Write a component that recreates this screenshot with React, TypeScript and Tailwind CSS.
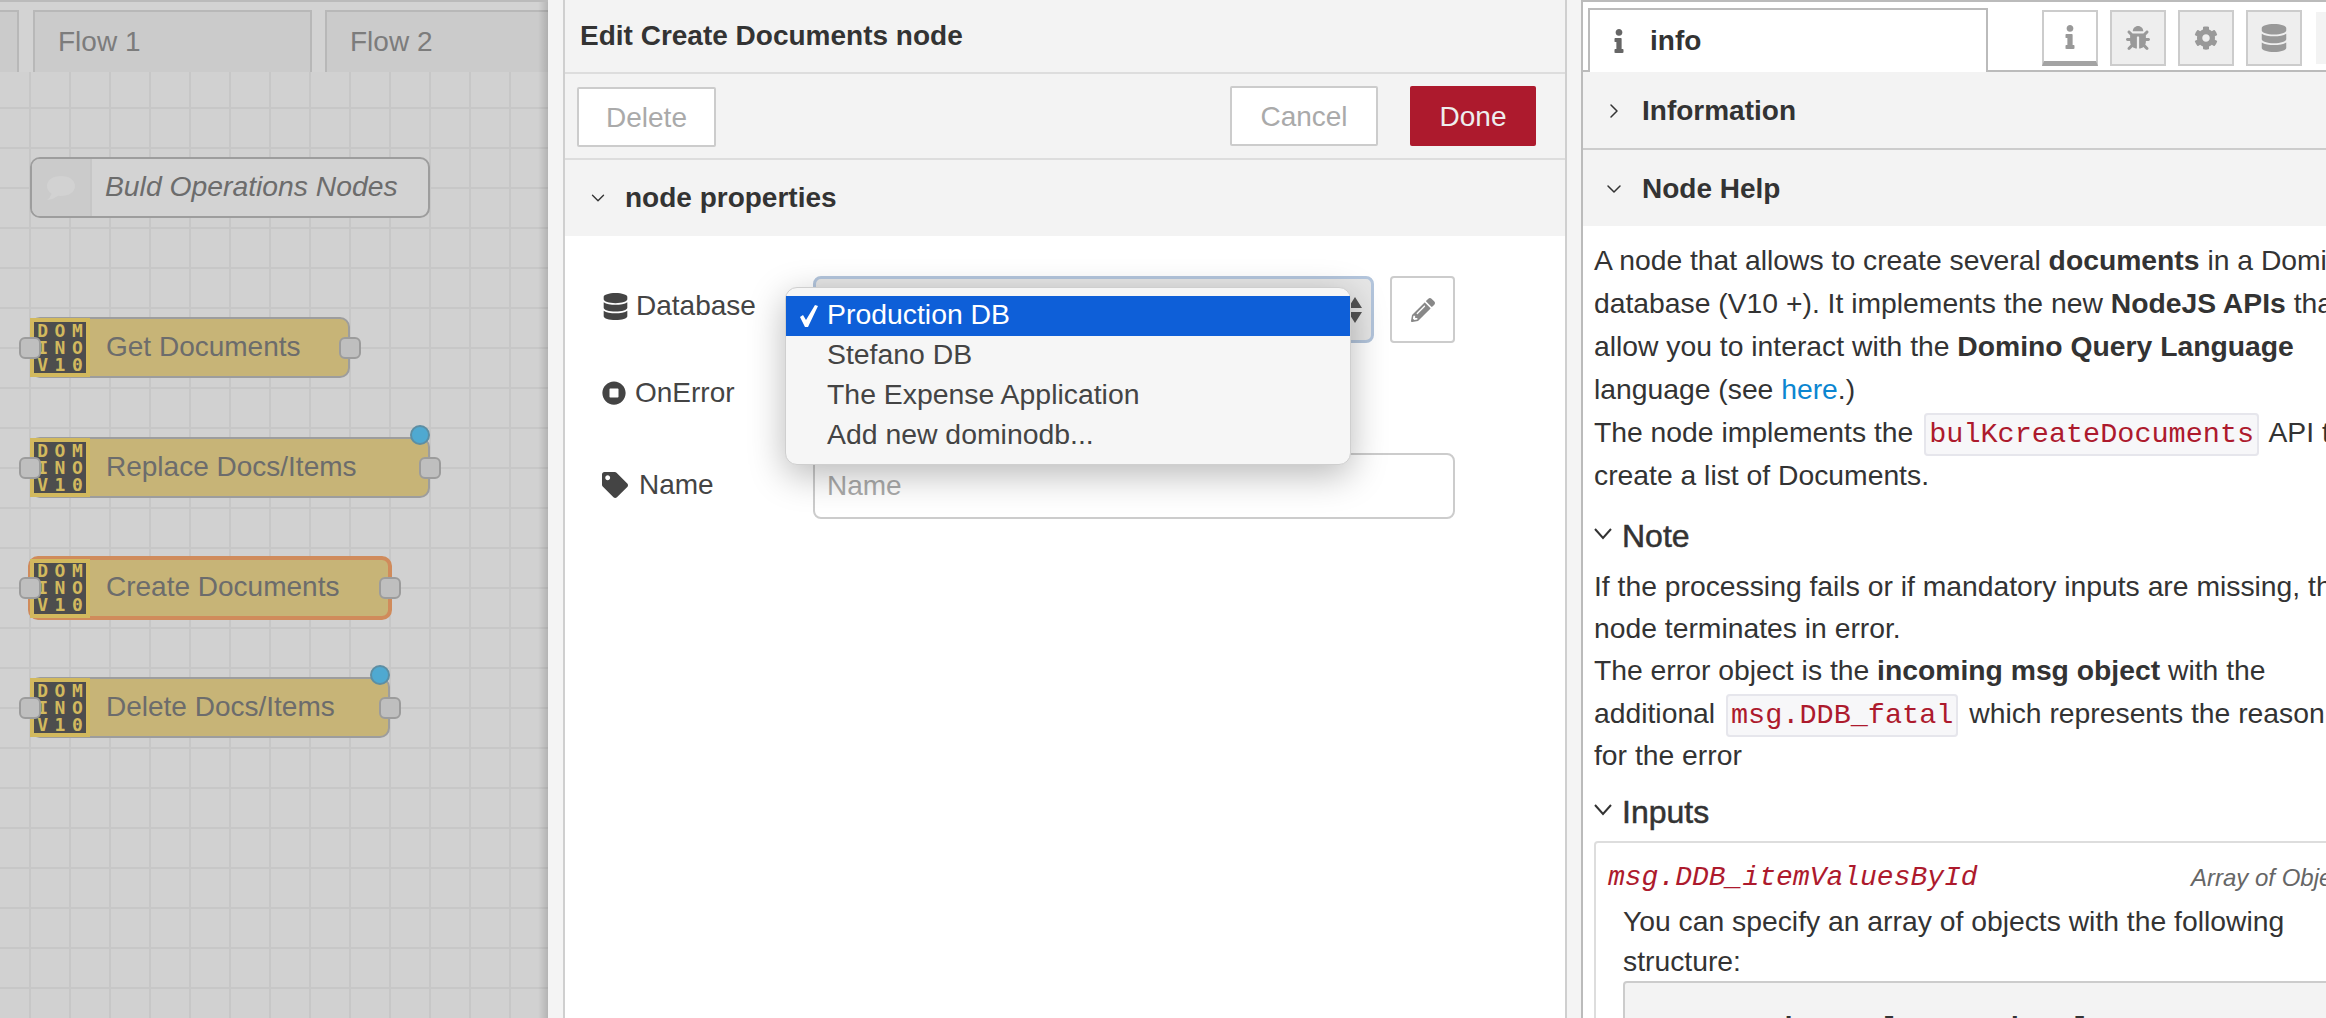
import React from 'react';
import { ChevronDown, ChevronRight } from 'lucide-react';
import { FaBug, FaCog, FaDatabase, FaInfo, FaPencilAlt, FaStopCircle, FaTag } from 'react-icons/fa';

interface FlowNode {
  label: string;
  left: number;
  top: number;
  width: number;
  changed?: boolean;
  selected?: boolean;
}

// positions are relative to the canvas, which starts under the tab strip
const NODES: FlowNode[] = [
  { label: 'Get Documents', left: 30, top: 245, width: 320 },
  { label: 'Replace Docs/Items', left: 30, top: 365, width: 400, changed: true },
  { label: 'Create Documents', left: 28, top: 484, width: 364, selected: true },
  { label: 'Delete Docs/Items', left: 30, top: 605, width: 360, changed: true },
];

const LOGO = ['D', 'O', 'M', 'I', 'N', 'O', 'V', '1', '0'];

const Port = ({ side }: { side: 'left' | 'right' }) => (
  <span
    className={`absolute top-1/2 h-[22px] w-[22px] -translate-y-1/2 rounded-[6px] border-2 border-[#9c9c9c] bg-[#bfbfbf] ${
      side === 'left' ? 'left-[-13px]' : 'right-[-13px]'
    }`}
  />
);

const NodeBox = ({ node }: { node: FlowNode }) => (
  <div
    className={`absolute flex items-center rounded-[10px] bg-[#c7b477] ${
      node.selected ? 'h-[64px] border-[4px] border-[#d08b5b]' : 'h-[61px] border-2 border-[#9d9d9d]'
    }`}
    style={{ left: node.left, top: node.top, width: node.width }}
  >
    <div className="ml-[-2px] grid h-[59px] w-[60px] shrink-0 grid-cols-3 grid-rows-3 place-items-center border-[4px] border-[#d2b95e] bg-[#4d4d4d] font-['DejaVu_Sans_Mono',monospace] text-[18px] font-bold leading-none text-[#d2b95e]">
      {LOGO.map((ch, i) => (
        <span key={i}>{ch}</span>
      ))}
    </div>
    <span className="ml-[16px] whitespace-nowrap pb-[2px] text-[28px] text-[#6c6c6c]">{node.label}</span>
    <Port side="left" />
    <Port side="right" />
    {node.changed && (
      <span className="absolute right-[-2px] top-[-14px] h-[20px] w-[20px] rounded-full border-2 border-[#5d8ea3] bg-[#4fa9d1]" />
    )}
  </div>
);

const Canvas = () => (
  <div className="relative flex h-full w-[548px] shrink-0 flex-col overflow-hidden border-t-2 border-[#bbbbbb] bg-[#d1d1d1]">
    <div className="flex h-[70px] shrink-0 items-end gap-[13px] bg-[#d3d3d3]">
      <div className="ml-[-40px] h-[62px] w-[59px] shrink-0 border-2 border-b-0 border-[#b8b8b8] bg-[#cbcbcb]" />
      <div className="ml-[1px] flex h-[62px] w-[279px] shrink-0 items-center border-2 border-b-0 border-[#b8b8b8] bg-[#cbcbcb] pl-[23px] text-[28px] text-[#7c7c7c]">
        Flow 1
      </div>
      <div className="flex h-[62px] w-[300px] shrink-0 items-center border-2 border-b-0 border-[#b8b8b8] bg-[#cbcbcb] pl-[23px] text-[28px] text-[#7c7c7c]">
        Flow 2
      </div>
    </div>
    <div className="relative flex-1 bg-[linear-gradient(#c7c7c7_2px,transparent_2px),linear-gradient(90deg,#c7c7c7_2px,transparent_2px)] bg-[size:40px_40px] bg-[position:29px_35px]">
      <div className="absolute left-[30px] top-[85px] flex h-[61px] w-[400px] items-center rounded-[10px] border-2 border-[#9d9d9d] bg-[#d3d3d3]">
        <div className="flex h-full w-[60px] items-center justify-center rounded-l-[8px] border-r-2 border-[#c6c6c6] bg-[#cbcbcb]">
          <svg width="32" height="30" viewBox="0 0 32 30">
            <path d="M16 3c8 0 14 4 14 10s-6 10-14 10c-1 0-2 0-3-.2C10 25 6 27 2 27c2-1.500 4-4 4.500-6.500C3.500 18.500 2 16 2 13 2 7 8 3 16 3z" fill="#d2d2d2" />
          </svg>
        </div>
        <span className="ml-[13px] whitespace-nowrap pb-[2px] text-[28.3px] italic text-[#6c6c6c]">Buld Operations Nodes</span>
      </div>
      {NODES.map((node) => (
        <NodeBox key={node.label} node={node} />
      ))}
    </div>
    <div className="absolute inset-y-0 right-0 w-[10px] bg-[linear-gradient(90deg,transparent,rgba(0,0,0,0.14))]" />
  </div>
);

const EditorPanel = () => (
  <div className="relative flex h-full w-[1004px] shrink-0 flex-col border-x-2 border-[#cfcfcf] bg-white">
    <div className="flex h-[74px] shrink-0 items-center border-b-2 border-[#dddddd] bg-[#f3f3f3] pl-[15px] text-[28px] font-bold text-[#333333]">
      Edit Create Documents node
    </div>
    <div className="flex h-[86px] shrink-0 items-center justify-between border-b-2 border-[#dddddd] bg-[#f3f3f3] pl-[12px] pr-[29px]">
      <button className="mt-[2px] h-[60px] w-[139px] rounded-[2px] border-2 border-[#cccccc] bg-white pt-[2px] text-[28px] text-[#aaaaaa]">
        Delete
      </button>
      <div className="flex gap-[32px]">
        <button className="h-[60px] w-[148px] rounded-[2px] border-2 border-[#cccccc] bg-white pt-[2px] text-[28px] text-[#aaaaaa]">
          Cancel
        </button>
        <button className="h-[60px] w-[126px] rounded-[2px] bg-[#ad1a2d] pt-[2px] text-[28px] text-[#eeeeee]">Done</button>
      </div>
    </div>
    <div className="flex h-[76px] shrink-0 items-center bg-[#f3f3f3] pl-[22px] text-[28px] font-bold text-[#333333]">
      <ChevronDown size={22} strokeWidth={1.5} className="mr-[16px] text-[#333333]" />
      node properties
    </div>
    <div className="pl-[37px] pt-[40px] text-[28px] text-[#444444]">
      <div className="flex h-[67px] items-start">
        <label className="flex h-[60px] w-[211px] items-center">
          <FaDatabase size={27} className="mr-[7px] text-[#444444]" />
          Database
        </label>
        <div className="relative flex h-[67px] w-[561px] items-center justify-end rounded-[8px] border-[3px] border-[#b3c5dc] bg-[#e6e6e6] pr-[9px]">
          <svg width="14" height="26" viewBox="0 0 14 26">
            <path d="M7 0l7 11H0zM7 26L0 15h14z" fill="#555555" />
          </svg>
        </div>
        <button className="ml-[16px] flex h-[67px] w-[65px] items-center justify-center rounded-[4px] border-2 border-[#cccccc] bg-white">
          <FaPencilAlt size={24} className="text-[#888888]" />
        </button>
      </div>
      <div className="mt-[16px] flex h-[67px] items-center">
        <label className="flex items-center">
          <FaStopCircle size={24} className="mr-[9px] text-[#444444]" />
          OnError
        </label>
      </div>
      <div className="mt-[27px] flex h-[66px] items-center">
        <label className="flex w-[211px] items-center pb-[2px]">
          <FaTag size={26} className="mr-[11px] text-[#444444]" />
          Name
        </label>
        <input
          placeholder="Name"
          className="h-[66px] w-[642px] rounded-[8px] border-2 border-[#cccccc] bg-white px-[12px] text-[28px] outline-none placeholder:text-[#aaaaaa]"
        />
      </div>
    </div>

    {/* open select menu, lies over the form */}
    <div className="absolute left-[220px] top-[287px] w-[566px] rounded-[12px] border border-[#cfcfcf] bg-[#f6f6f6] py-[8px] text-[28.4px] leading-[36px] text-[#444444] shadow-[0_10px_36px_rgba(0,0,0,0.28)]">
      <div className="relative h-[40px] bg-[#0e5fd8] pl-[41px] text-white">
        <svg width="20" height="24" viewBox="0 0 20 24" className="absolute left-[13px] top-[8px]">
          <path d="M1 13l3-2 3 5L16 1l3 1-10 21H6z" fill="#ffffff" />
        </svg>
        Production DB
      </div>
      <div className="h-[40px] pl-[41px]">Stefano DB</div>
      <div className="h-[40px] pl-[41px]">The Expense Application</div>
      <div className="h-[40px] pl-[41px]">Add new dominodb...</div>
    </div>
  </div>
);

const SideButton = ({ children, active }: { children: React.ReactNode; active?: boolean }) => (
  <div
    className={`flex h-[56px] w-[56px] items-center justify-center border-2 border-[#cccccc] text-[#999999] ${
      active ? 'border-b-[5px] border-b-[#a3a3a3] bg-white' : 'bg-[#eeeeee]'
    }`}
  >
    {children}
  </div>
);

const Code = ({ children }: { children: React.ReactNode }) => (
  <code className="mx-[3px] rounded-[4px] border-2 border-[#e6e6ec] bg-[#f7f7f9] px-[3px] py-[3px] font-['Liberation_Mono',monospace] text-[28.5px] leading-none text-[#ad1a2d]">
    {children}
  </code>
);

const SectionHeader = ({ title, open }: { title: string; open: boolean }) => (
  <div className="flex h-[76px] shrink-0 items-center bg-[#f3f3f3] pl-[19px] pt-[1px] text-[28px] font-bold text-[#333333]">
    {open ? (
      <ChevronDown size={24} strokeWidth={1.5} className="mr-[16px]" />
    ) : (
      <ChevronRight size={24} strokeWidth={1.5} className="mr-[16px]" />
    )}
    {title}
  </div>
);

const Heading = ({ children }: { children: React.ReactNode }) => (
  <div className="flex h-[48px] items-center text-[32px] text-[#333333] [-webkit-text-stroke:0.5px_#333333]">
    <svg width="18" height="12" viewBox="0 0 18 12" className="mr-[10px] mt-[-4px] shrink-0">
      <path d="M1 1l8 9 8-9" fill="none" stroke="#333333" strokeWidth="2" />
    </svg>
    {children}
  </div>
);

const Sidebar = () => (
  <div className="flex h-full min-w-0 flex-1 flex-col overflow-hidden border-l-2 border-t-2 border-[#bbbbbb] bg-white">
    <div className="flex h-[70px] shrink-0 items-start border-b-2 border-[#bbbbbb] pl-[5px]">
      <div className="mt-[6px] flex h-[64px] w-[400px] shrink-0 items-center border-2 border-b-0 border-[#bbbbbb] bg-white pl-[17px] text-[28px] font-bold text-[#333333]">
        <FaInfo size={24} className="mr-[19px] text-[#666666]" />
        info
      </div>
      <div className="ml-[54px] mt-[8px] flex gap-[12px]">
        <SideButton active>
          <FaInfo size={24} />
        </SideButton>
        <SideButton>
          <FaBug size={24} />
        </SideButton>
        <SideButton>
          <FaCog size={24} />
        </SideButton>
        <SideButton>
          <FaDatabase size={28} />
        </SideButton>
      </div>
      <div className="ml-[14px] mt-[10px] h-[52px] w-[20px] shrink-0 bg-[#f3f3f3]" />
    </div>
    <SectionHeader title="Information" open={false} />
    <div className="h-[2px] shrink-0 bg-[#cccccc]" />
    <SectionHeader title="Node Help" open />
    <div className="w-[900px] whitespace-nowrap pl-[11px] pt-[13px] text-[28.3px] leading-[42.200px] text-[#333333]">
      <p className="leading-[43px]">
        A node that allows to create several <b>documents</b> in a Domino
        <br />
        database (V10 +). It implements the new <b>NodeJS APIs</b> that
        <br />
        allow you to interact with the <b>Domino Query Language</b>
        <br />
        language (see <a className="text-[#0b86d1]">here</a>.)
        <br />
        The node implements the <Code>bulKcreateDocuments</Code> API to
        <br />
        create a list of Documents.
      </p>
      <div className="mt-[15px]">
        <Heading>Note</Heading>
      </div>
      <p className="mt-[5px]">
        If the processing fails or if mandatory inputs are missing, the
        <br />
        node terminates in error.
        <br />
        The error object is the <b>incoming msg object</b> with the
        <br />
        additional <Code>msg.DDB_fatal</Code> which represents the reason
        <br />
        for the error
      </p>
      <div className="mt-[12px]">
        <Heading>Inputs</Heading>
      </div>
      <div className="mt-[5px] w-[785px] rounded-t-[4px] border-2 border-b-0 border-[#dddddd] pl-[12px] pt-[14px]">
        <div className="flex items-center justify-between pr-[14px]">
          <span className="font-['Liberation_Mono',monospace] text-[28px] italic text-[#ad1a2d]">msg.DDB_itemValuesById</span>
          <span className="text-[24px] italic text-[#666666]">Array of Objects</span>
        </div>
        <div className="mt-[3px] pl-[15px] leading-[39.500px]">
          You can specify an array of objects with the following
          <br />
          structure:
        </div>
        <pre className="ml-[15px] rounded-t-[4px] border-2 border-b-0 border-[#cccccc] bg-[#f3f3f3] pl-[86px] pt-[25px] font-['Liberation_Mono',monospace] text-[28.5px] font-bold text-[#333333]">
          DDB_itemValuesById = [
        </pre>
      </div>
    </div>
  </div>
);

export default function App() {
  return (
    <div className="flex h-[1018px] w-[2326px] overflow-hidden bg-[#f4f4f4] font-['Liberation_Sans',Arial,sans-serif]">
      <Canvas />
      <div className="h-full w-[15px] shrink-0" />
      <EditorPanel />
      <div className="h-full w-[14px] shrink-0" />
      <Sidebar />
    </div>
  );
}
